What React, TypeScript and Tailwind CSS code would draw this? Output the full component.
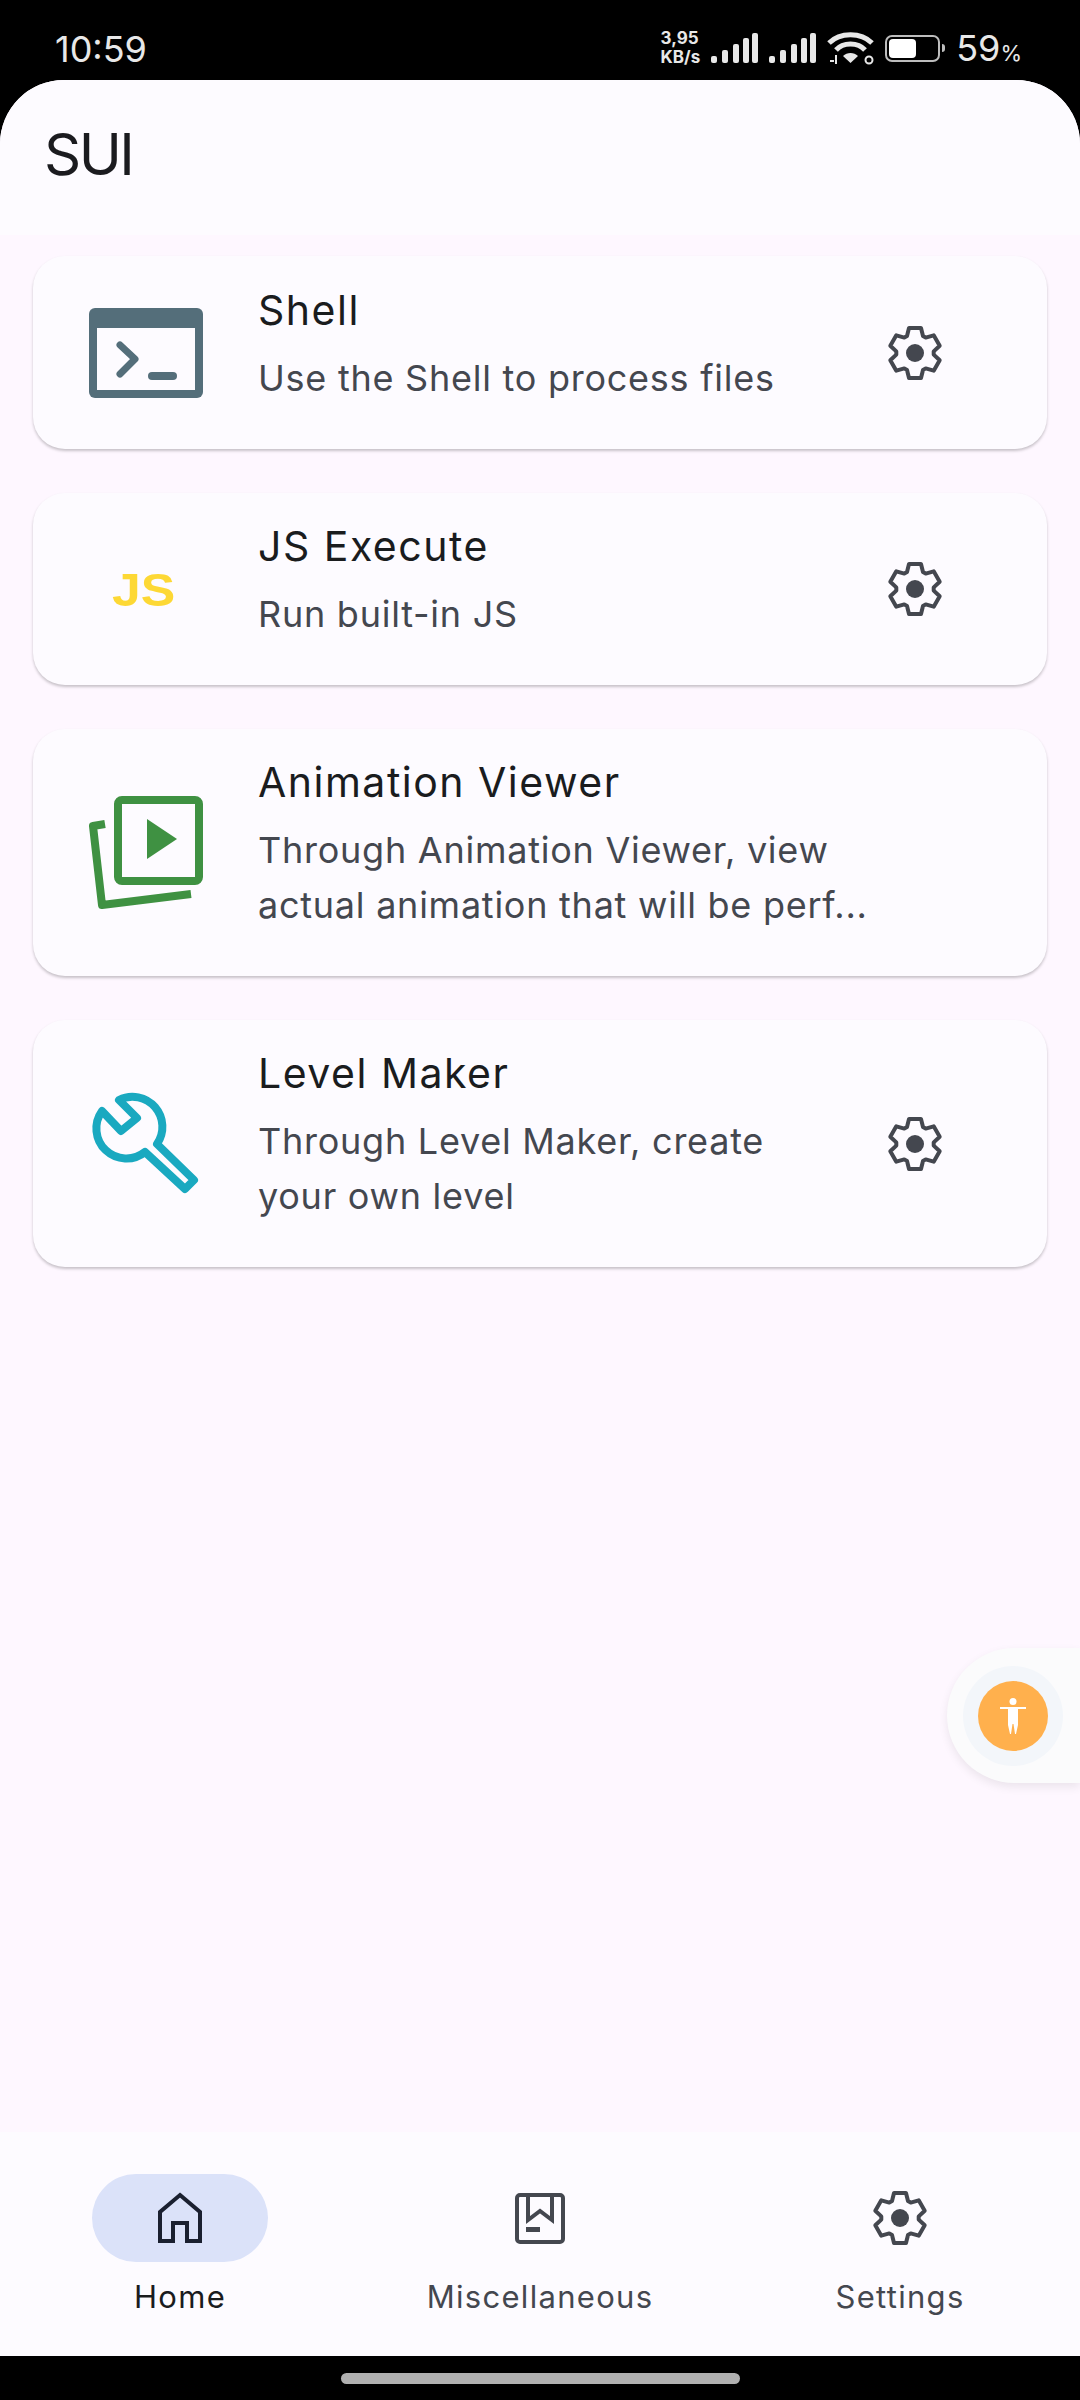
const font = "font-['Inter','Noto_Sans',sans-serif]";

// six tooth gear outline, centred on 0,0
const gearPoints = [0, 60, 120, 180, 240, 300]
  .flatMap((deg) => {
    const r = (deg * Math.PI) / 180;
    const tooth = [[-6, -25], [6, -25], [8, -17], [10.7, -15.4]];
    return tooth.map(([x, y]) => {
      const px = x * Math.cos(r) - y * Math.sin(r);
      const py = x * Math.sin(r) + y * Math.cos(r);
      return `${px.toFixed(1)},${py.toFixed(1)}`;
    });
  })
  .join(" ");

function Gear() {
  return (
    <svg width="58" height="58" viewBox="-29 -29 58 58" className="shrink-0">
      <polygon points={gearPoints} fill="none" stroke="#44474f" strokeWidth="4" strokeLinejoin="round" />
      <circle r="9" fill="#44474f" />
    </svg>
  );
}

function TerminalIcon() {
  return (
    <svg width="114" height="90" viewBox="0 0 114 90">
      <rect width="114" height="90" rx="6" fill="#546e7a" />
      <rect x="8" y="20" width="98" height="62" fill="#fdfbff" />
      <path d="M31 37 L46 51 L31 66" fill="none" stroke="#546e7a" strokeWidth="7" strokeLinecap="round" strokeLinejoin="round" />
      <path d="M63 68 H84" fill="none" stroke="#546e7a" strokeWidth="8" strokeLinecap="round" />
    </svg>
  );
}

function JsIcon() {
  return (
    <span className="block w-[114px] origin-left translate-x-[23px] scale-x-[1.1] font-['Liberation_Sans',sans-serif] text-[47px] leading-none font-bold text-[#fdd835]">
      JS
    </span>
  );
}

function AnimationIcon() {
  return (
    <svg width="114" height="114" viewBox="0 0 114 114">
      <rect x="29" y="4" width="81" height="81" rx="4" fill="none" stroke="#3f9142" strokeWidth="8" />
      <path d="M58 23 V63 L88 43 Z" fill="#3f9142" />
      <path d="M16 28 L4 30 L13 109 L102 98" fill="none" stroke="#3f9142" strokeWidth="8" strokeLinejoin="round" />
    </svg>
  );
}

function WrenchIcon() {
  return (
    <svg width="114" height="108" viewBox="0 0 114 108">
      <path
        d="M13 21 L32 41 L48 28 L30 10 A30 30 0 0 1 68 54 L105 90 L96 99 L56 62 A30 30 0 0 1 13 21 Z"
        fill="none"
        stroke="#1aa9c0"
        strokeWidth="8"
        strokeLinejoin="round"
      />
    </svg>
  );
}

const cards = [
  { title: "Shell", desc: ["Use the Shell to process files"], icon: <TerminalIcon />, h: "h-[193px]" },
  { title: "JS Execute", desc: ["Run built-in JS"], icon: <JsIcon />, h: "h-[192px]" },
  {
    title: "Animation Viewer",
    desc: ["Through Animation Viewer, view", "actual animation that will be perf..."],
    icon: <AnimationIcon />,
    h: "h-[247px]",
    noGear: true,
  },
  {
    title: "Level Maker",
    desc: ["Through Level Maker, create", "your own level"],
    icon: <WrenchIcon />,
    h: "h-[247px]",
  },
];

function StatusBar() {
  return (
    <div className="flex h-[80px] items-end bg-black pb-[13px] pl-[55px] pr-[58px] text-[#e8e8e8]">
      <span className="text-[36px] leading-none">10:59</span>
      <div className="ml-auto flex items-center gap-[11px]">
        <span className="flex flex-col text-[17px] leading-[19px] font-bold">
          <span>3,95</span>
          <span>KB/s</span>
        </span>
        <Signal />
        <Signal />
        <Wifi />
        <Battery />
        <span className="text-[36px] leading-none">
          59<span className="text-[22px]">%</span>
        </span>
      </div>
    </div>
  );
}

function Signal() {
  return (
    <svg width="47" height="30" viewBox="0 0 47 30">
      <rect x="0" y="23" width="6" height="7" rx="2" fill="#e8e8e8" />
      <rect x="11" y="17" width="6" height="13" rx="2" fill="#e8e8e8" />
      <rect x="22" y="11" width="6" height="19" rx="2" fill="#e8e8e8" />
      <rect x="41" y="0" width="6" height="30" rx="2" fill="#e8e8e8" />
      <rect x="32" y="5" width="6" height="25" rx="2" fill="#e8e8e8" />
    </svg>
  );
}

function Wifi() {
  return (
    <svg width="47" height="34" viewBox="0 0 47 34">
      <path d="M2 12 C13 1 34 1 45 12" fill="none" stroke="#e8e8e8" strokeWidth="5" />
      <path d="M9 19 C16 11 31 11 38 19" fill="none" stroke="#e8e8e8" strokeWidth="5" />
      <path d="M23.5 32 L16 25 C20 21 27 21 31 25 Z" fill="#e8e8e8" />
      <path d="M3 30 H7 M9 24 V33" stroke="#e8e8e8" strokeWidth="2" />
      <circle cx="42" cy="29" r="3.5" fill="none" stroke="#e8e8e8" strokeWidth="2" />
    </svg>
  );
}

function Battery() {
  return (
    <div className="flex items-center gap-[2px]">
      <div className="h-[27px] w-[55px] rounded-[7px] border-2 border-[#bdbdbd] p-[2px]">
        <div className="h-full w-[58%] rounded-[4px] bg-white" />
      </div>
      <div className="h-[8px] w-[3px] rounded-r-full bg-[#bdbdbd]" />
    </div>
  );
}

function NavItem({ label, active, children }: { label: string; active?: boolean; children: React.ReactNode }) {
  return (
    <div className="flex w-[360px] flex-col items-center">
      <div className={`flex h-[88px] w-[176px] items-center justify-center rounded-full ${active ? "bg-[#dbe2f9]" : ""}`}>
        {children}
      </div>
      <span className={`mt-[15px] text-[31px] leading-[40px] tracking-[1.3px] ${active ? "text-[#1a1c1e]" : "text-[#44474f]"}`}>
        {label}
      </span>
    </div>
  );
}

export default function App() {
  return (
    <div className={`flex h-[2400px] w-[1080px] flex-col overflow-hidden bg-black ${font}`}>
      <StatusBar />

      <div className="relative flex flex-1 flex-col overflow-hidden rounded-t-[64px] bg-[#fef7ff]">
        <header className="flex h-[155px] shrink-0 items-start bg-[#fdfbff] pl-[44px] pt-[36px]">
          <h1 className="text-[58px] leading-[76px] tracking-[-2.5px] text-[#1b1b1f]">SUI</h1>
        </header>

        <main className="flex flex-1 flex-col gap-[44px] px-[33px] pt-[21px]">
          {cards.map((c) => (
            <div
              key={c.title}
              className={`flex shrink-0 items-center rounded-[32px] bg-[#fdfbff] pl-[56px] pr-[103px] shadow-[0_2px_3px_rgba(0,0,0,0.22)] ${c.h}`}
            >
              <div className="flex w-[169px] shrink-0 items-center">{c.icon}</div>
              <div className="min-w-0 flex-1 pb-[17px]">
                <div className="text-[41px] leading-[54px] tracking-[1.5px] text-[#1a1c1e]">{c.title}</div>
                <div className="mt-[14px] text-[36px] leading-[55px] tracking-[0.75px] text-[#44474f]">
                  {c.desc.map((line) => (
                    <div key={line} className="whitespace-nowrap">{line}</div>
                  ))}
                </div>
              </div>
              {!c.noGear && <Gear />}
            </div>
          ))}
        </main>

        {/* floating accessibility button */}
        <div className="absolute right-0 top-[1568px] flex h-[135px] w-[133px] items-center rounded-l-full bg-[#fbfbfc] pl-[16px] shadow-[0_4px_10px_rgba(0,0,0,0.08)]">
          <div className="flex h-[100px] w-[100px] items-center justify-center rounded-full bg-[#f3f6fa]">
            <div className="flex h-[70px] w-[70px] items-center justify-center rounded-full bg-[#ffb04d]">
              <svg width="28" height="36" viewBox="0 0 28 36" fill="#ffffff">
                <circle cx="14" cy="3.5" r="3.5" />
                <path d="M1 9 H27 V11 H19 V27 L17 36 H16 L14.5 26 H13.5 L12 36 H11 L9 27 V11 H1 Z" />
              </svg>
            </div>
          </div>
        </div>

        <nav className="flex h-[224px] shrink-0 justify-center bg-[#fdfbff] pt-[42px]">
          <NavItem label="Home" active>
            <svg width="48" height="52" viewBox="0 0 48 52" fill="none" stroke="#1a2030" strokeWidth="4">
              <path d="M24 3 L44 20 V49 H31 V31 H17 V49 H4 V20 Z" />
            </svg>
          </NavItem>
          <NavItem label="Miscellaneous">
            <svg width="50" height="52" viewBox="0 0 50 52" fill="none" stroke="#44474f" strokeWidth="4">
              <rect x="2" y="3" width="46" height="47" rx="3" />
              <path d="M13 3 V28 L25 19 L37 28 V3" />
              <rect x="11" y="35" width="14" height="5" fill="#44474f" stroke="none" />
            </svg>
          </NavItem>
          <NavItem label="Settings">
            <Gear />
          </NavItem>
        </nav>
      </div>

      <div className="flex h-[44px] shrink-0 items-start justify-center bg-black pt-[17px]">
        <div className="h-[11px] w-[399px] rounded-full bg-[#b0b0b0]" />
      </div>
    </div>
  );
}
